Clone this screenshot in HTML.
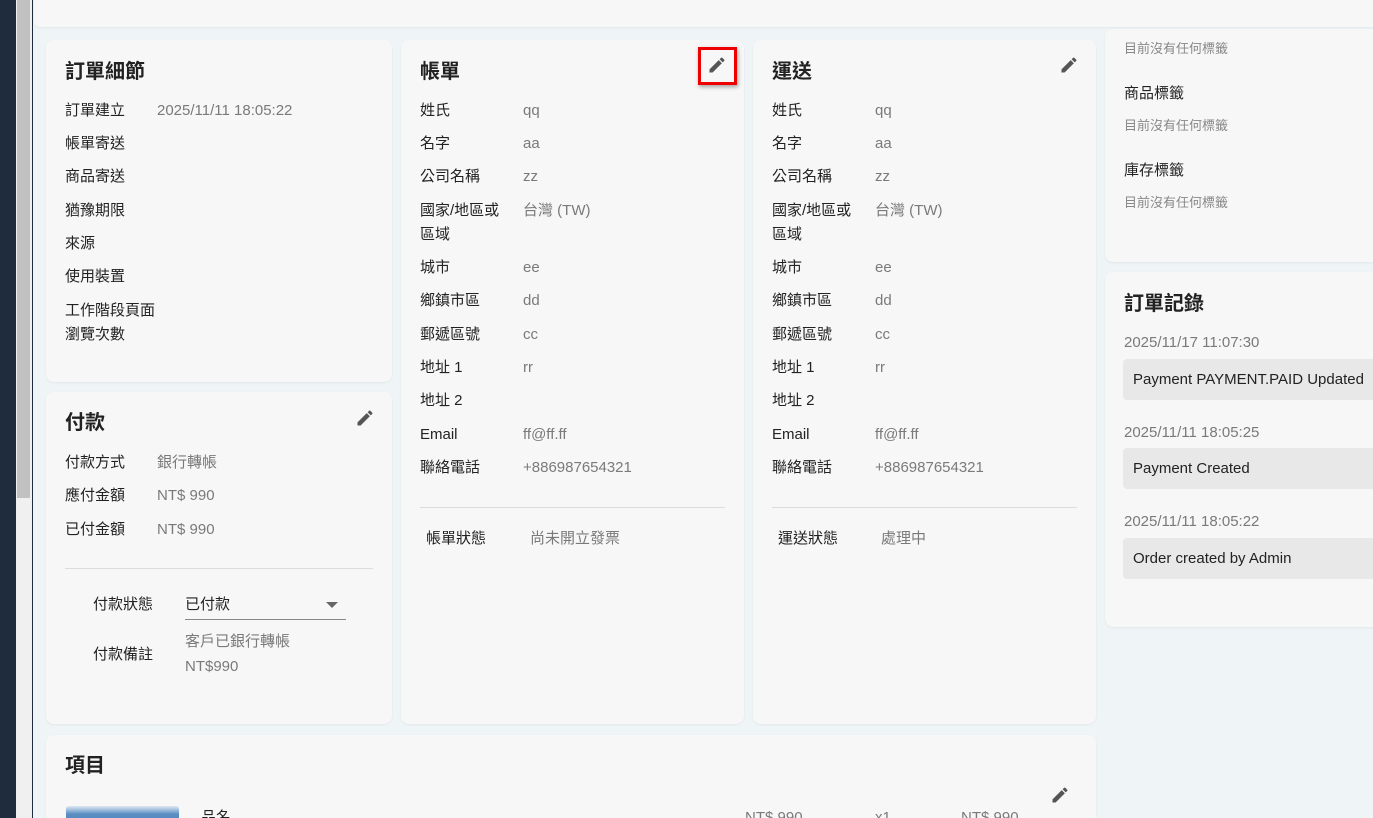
<!DOCTYPE html>
<html style="overflow:hidden;width:1373px;height:818px"><head><meta charset="utf-8"><style>
*{margin:0;padding:0;box-sizing:border-box}
body{width:1373px;height:818px;overflow:hidden;background:#eff5f7;font-family:"Liberation Sans","Noto Sans CJK TC",sans-serif;font-size:15px;color:#222;position:relative}
.a{position:absolute;white-space:nowrap;line-height:24px;margin-top:2px}
.c{position:absolute;background:#f7f7f7;border-radius:8px;box-shadow:0 1px 2px rgba(0,0,0,.06)}
.t{font-size:20px;font-weight:bold;color:#222}
.v{color:#7a7a7a}
.s{font-size:13px;color:#888}
.hr{position:absolute;height:1px;background:#dcdcdc}
.box{position:absolute;background:#e8e8e8;border-radius:4px;height:41px;left:1123px;width:260px;padding-left:10px;line-height:41px;font-size:15px;color:#222}
svg.p{position:absolute;width:20px;height:20px}
</style></head><body>
<div style="position:absolute;left:0;top:0;width:16px;height:818px;background:#1f2c3d"></div>
<div style="position:absolute;left:16px;top:0;width:16px;height:818px;background:#f0f0f0"></div>
<div style="position:absolute;left:17px;top:0;width:13px;height:498px;background:#c1c1c1"></div>
<div style="position:absolute;left:32px;top:0;width:1px;height:818px;background:#1f2c3d"></div>

<div class="c" style="left:34px;top:-8px;width:1350px;height:35px;border-radius:0 0 6px 6px"></div>
<div class="c" style="left:46px;top:40px;width:346px;height:342px"></div>
<div class="c" style="left:46px;top:392px;width:346px;height:332px"></div>
<div class="c" style="left:401px;top:40px;width:343px;height:684px"></div>
<div class="c" style="left:753px;top:40px;width:343px;height:684px"></div>
<div class="c" style="left:46px;top:735px;width:1050px;height:83px;border-radius:8px 8px 0 0"></div>
<div class="c" style="left:1105px;top:29px;width:280px;height:233px"></div>
<div class="c" style="left:1105px;top:272px;width:280px;height:355px"></div>

<!-- order details -->
<div class="a t" style="left:65px;top:58px">訂單細節</div>
<div class="a" style="left:65px;top:97px">訂單建立</div><div class="a v" style="left:157px;top:97px">2025/11/11 18:05:22</div>
<div class="a" style="left:65px;top:130px">帳單寄送</div>
<div class="a" style="left:65px;top:163px">商品寄送</div>
<div class="a" style="left:65px;top:197px">猶豫期限</div>
<div class="a" style="left:65px;top:230px">來源</div>
<div class="a" style="left:65px;top:263px">使用裝置</div>
<div class="a" style="left:65px;top:297px">工作階段頁面</div>
<div class="a" style="left:65px;top:321px">瀏覽次數</div>

<!-- payment -->
<div class="a t" style="left:65px;top:409px">付款</div>
<div class="a" style="left:65px;top:449px">付款方式</div><div class="a v" style="left:157px;top:449px">銀行轉帳</div>
<div class="a" style="left:65px;top:482px">應付金額</div><div class="a v" style="left:157px;top:482px">NT$ 990</div>
<div class="a" style="left:65px;top:516px">已付金額</div><div class="a v" style="left:157px;top:516px">NT$ 990</div>
<div class="hr" style="left:65px;top:568px;width:308px"></div>
<div class="a" style="left:93px;top:591px">付款狀態</div>
<div class="a" style="left:185px;top:591px">已付款</div>
<div style="position:absolute;left:326px;top:602px;border-left:6px solid transparent;border-right:6px solid transparent;border-top:6px solid #666"></div>
<div style="position:absolute;left:185px;top:619px;width:161px;height:1px;background:#888"></div>
<div class="a" style="left:93px;top:641px">付款備註</div>
<div class="a v" style="left:185px;top:628px">客戶已銀行轉帳</div>
<div class="a v" style="left:185px;top:653px">NT$990</div>

<!-- billing -->
<div class="a t" style="left:420px;top:58px">帳單</div>
<div class="a" style="left:420px;top:97px">姓氏</div><div class="a v" style="left:523px;top:97px">qq</div>
<div class="a" style="left:420px;top:130px">名字</div><div class="a v" style="left:523px;top:130px">aa</div>
<div class="a" style="left:420px;top:163px">公司名稱</div><div class="a v" style="left:523px;top:163px">zz</div>
<div class="a" style="left:420px;top:197px">國家/地區或</div><div class="a v" style="left:523px;top:197px">台灣 (TW)</div>
<div class="a" style="left:420px;top:221px">區域</div>
<div class="a" style="left:420px;top:254px">城市</div><div class="a v" style="left:523px;top:254px">ee</div>
<div class="a" style="left:420px;top:287px">鄉鎮市區</div><div class="a v" style="left:523px;top:287px">dd</div>
<div class="a" style="left:420px;top:321px">郵遞區號</div><div class="a v" style="left:523px;top:321px">cc</div>
<div class="a" style="left:420px;top:354px">地址 1</div><div class="a v" style="left:523px;top:354px">rr</div>
<div class="a" style="left:420px;top:387px">地址 2</div>
<div class="a" style="left:420px;top:421px">Email</div><div class="a v" style="left:523px;top:421px">ff@ff.ff</div>
<div class="a" style="left:420px;top:454px">聯絡電話</div><div class="a v" style="left:523px;top:454px">+886987654321</div>
<div class="hr" style="left:420px;top:507px;width:305px"></div>
<div class="a" style="left:426px;top:525px">帳單狀態</div><div class="a v" style="left:530px;top:525px">尚未開立發票</div>

<!-- shipping -->
<div class="a t" style="left:772px;top:58px">運送</div>
<div class="a" style="left:772px;top:97px">姓氏</div><div class="a v" style="left:875px;top:97px">qq</div>
<div class="a" style="left:772px;top:130px">名字</div><div class="a v" style="left:875px;top:130px">aa</div>
<div class="a" style="left:772px;top:163px">公司名稱</div><div class="a v" style="left:875px;top:163px">zz</div>
<div class="a" style="left:772px;top:197px">國家/地區或</div><div class="a v" style="left:875px;top:197px">台灣 (TW)</div>
<div class="a" style="left:772px;top:221px">區域</div>
<div class="a" style="left:772px;top:254px">城市</div><div class="a v" style="left:875px;top:254px">ee</div>
<div class="a" style="left:772px;top:287px">鄉鎮市區</div><div class="a v" style="left:875px;top:287px">dd</div>
<div class="a" style="left:772px;top:321px">郵遞區號</div><div class="a v" style="left:875px;top:321px">cc</div>
<div class="a" style="left:772px;top:354px">地址 1</div><div class="a v" style="left:875px;top:354px">rr</div>
<div class="a" style="left:772px;top:387px">地址 2</div>
<div class="a" style="left:772px;top:421px">Email</div><div class="a v" style="left:875px;top:421px">ff@ff.ff</div>
<div class="a" style="left:772px;top:454px">聯絡電話</div><div class="a v" style="left:875px;top:454px">+886987654321</div>
<div class="hr" style="left:772px;top:507px;width:305px"></div>
<div class="a" style="left:778px;top:525px">運送狀態</div><div class="a v" style="left:881px;top:525px">處理中</div>

<!-- pencils -->
<div style="position:absolute;left:698px;top:47px;width:39px;height:38px;border:3px solid #e00;box-shadow:1px 2px 4px rgba(0,0,0,.35)"></div>
<svg class="p" style="left:707px;top:55px" viewBox="0 0 24 24"><path fill="#555" d="M3 17.25V21h3.75L17.81 9.94l-3.75-3.75L3 17.25zM20.71 7.04a1 1 0 000-1.41l-2.34-2.34a1 1 0 00-1.41 0l-1.830 1.83 3.75 3.75 1.83-1.83z"/></svg>
<svg class="p" style="left:1059px;top:55px" viewBox="0 0 24 24"><path fill="#555" d="M3 17.25V21h3.75L17.81 9.94l-3.75-3.75L3 17.25zM20.71 7.04a1 1 0 000-1.41l-2.34-2.34a1 1 0 00-1.41 0l-1.83 1.83 3.75 3.75 1.83-1.83z"/></svg>
<svg class="p" style="left:355px;top:408px" viewBox="0 0 24 24"><path fill="#555" d="M3 17.25V21h3.75L17.81 9.94l-3.75-3.75L3 17.25zM20.71 7.04a1 1 0 000-1.41l-2.34-2.34a1 1 0 00-1.41 0l-1.83 1.83 3.75 3.75 1.83-1.83z"/></svg>
<svg class="p" style="left:1050px;top:785px" viewBox="0 0 24 24"><path fill="#555" d="M3 17.25V21h3.75L17.81 9.94l-3.75-3.75L3 17.25zM20.71 7.04a1 1 0 000-1.41l-2.34-2.34a1 1 0 00-1.41 0l-1.83 1.83 3.75 3.75 1.83-1.83z"/></svg>

<!-- items -->
<div class="a t" style="left:65px;top:752px">項目</div>
<div style="position:absolute;left:66px;top:806px;width:113px;height:20px;background:linear-gradient(#dfe9f2,#5b8fc4 40%,#4a7fb8);border-radius:3px"></div>
<div class="a" style="left:201px;top:804px">品名</div>
<div class="a v" style="left:745px;top:804px">NT$ 990</div>
<div class="a v" style="left:875px;top:804px">x1</div>
<div class="a v" style="left:961px;top:804px">NT$ 990</div>

<!-- tags -->
<div class="a s" style="left:1124px;top:35px">目前沒有任何標籤</div>
<div class="a" style="left:1124px;top:80px">商品標籤</div>
<div class="a s" style="left:1124px;top:112px">目前沒有任何標籤</div>
<div class="a" style="left:1124px;top:157px">庫存標籤</div>
<div class="a s" style="left:1124px;top:189px">目前沒有任何標籤</div>

<!-- log -->
<div class="a t" style="left:1124px;top:290px">訂單記錄</div>
<div class="a v" style="left:1124px;top:329px">2025/11/17 11:07:30</div>
<div class="box" style="top:359px">Payment PAYMENT.PAID Updated</div>
<div class="a v" style="left:1124px;top:419px">2025/11/11 18:05:25</div>
<div class="box" style="top:448px">Payment Created</div>
<div class="a v" style="left:1124px;top:508px">2025/11/11 18:05:22</div>
<div class="box" style="top:538px">Order created by Admin</div>
</body></html>
